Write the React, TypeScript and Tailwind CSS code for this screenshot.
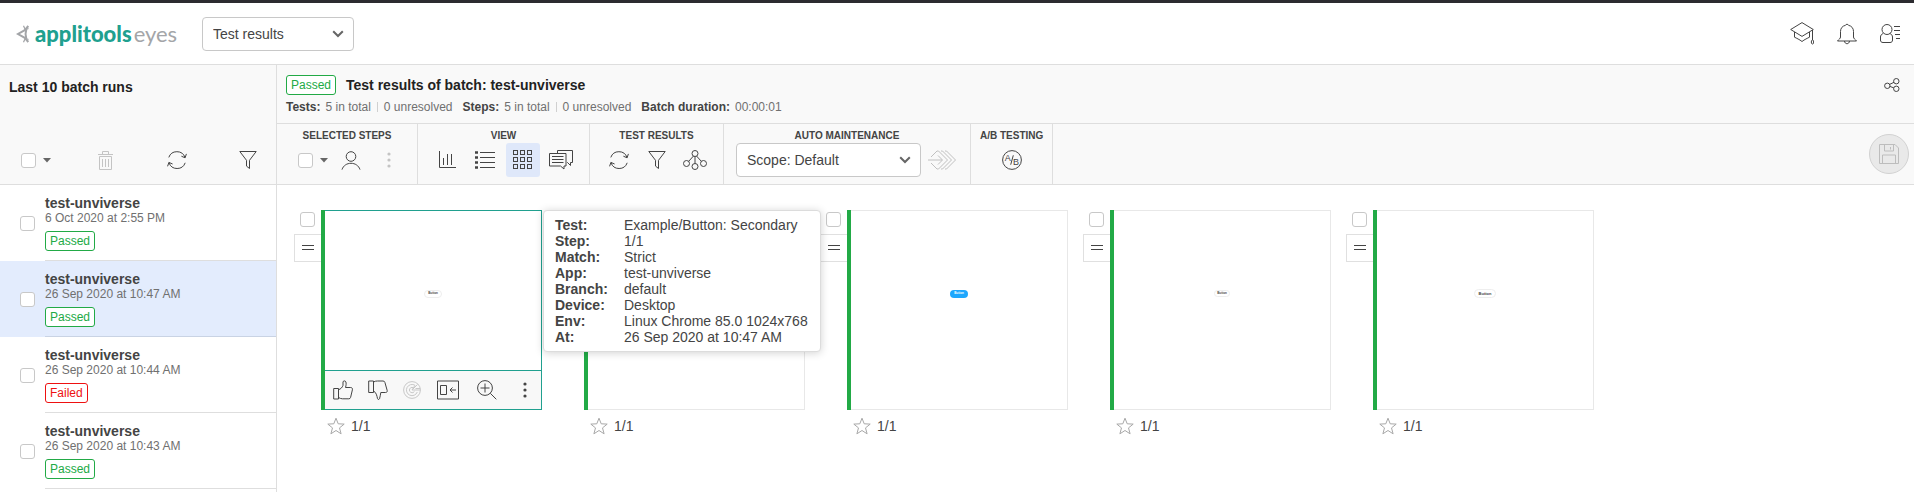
import type { ReactNode } from "react";

type IconProps = { w: number; h: number; className?: string; children: ReactNode };

function Icon({ w, h, className = "text-[#444]", children }: IconProps) {
  return (
    <svg
      width={w}
      height={h}
      viewBox={`0 0 ${w} ${h}`}
      fill="none"
      stroke="currentColor"
      strokeWidth="1"
      aria-hidden="true"
      className={`shrink-0 ${className}`}
    >
      {children}
    </svg>
  );
}

const EyeLogo = () => (
  <Icon w={14} h={18} className="text-[#a3a5a8]">
    <path d="M12.300 1L8.800 5.200 2 9l6.800 3.800 3.500 4.200" strokeWidth="2" />
    <path d="M7.500.8l1.800 4 3.200-1.300M7.500 17.200l1.800-4 3.200 1.300" strokeWidth="1.200" />
    <path d="M10.300 4.500c-1 3-1 6 0 9" strokeWidth="2" />
  </Icon>
);

const RefreshIcon = () => (
  <Icon w={20} h={18}>
    <path d="M1.8 6.4A8.6 8.6 0 0 1 18 6.4M18.2 11.8A8.6 8.6 0 0 1 2 11.8" />
    <path d="M14.4 5.2l3.7 1.6 1.3-3.9M5.6 13l-3.700-1.600L.6 15.300" />
  </Icon>
);

const FilterIcon = () => (
  <Icon w={18} h={18}>
    <path d="M.8.5h16.400L10.500 9.300v8.200l-3-2.400V9.300z" />
  </Icon>
);

const TrashIcon = () => (
  <Icon w={15} h={19} className="text-[#c4c4c4]">
    <path d="M1.500 5.500h12v13h-12zM0 3.500h15M4.500 3.500v-3h6v3M4.500 8v8M7.500 8v8M10.500 8v8" />
  </Icon>
);

const PersonIcon = () => (
  <Icon w={20} h={19}>
    <circle cx="10" cy="5.500" r="4.800" />
    <path d="M1 18.600c1.400-4.200 5-6.300 9-6.300s7.600 2.100 9 6.300" />
  </Icon>
);

const DotsIcon = ({ className }: { className?: string }) => (
  <Icon w={4} h={18} className={className}>
    <g fill="currentColor" stroke="none">
      <circle cx="2" cy="3" r="1.600" />
      <circle cx="2" cy="9" r="1.600" />
      <circle cx="2" cy="15" r="1.600" />
    </g>
  </Icon>
);

const ChartIcon = () => (
  <Icon w={18} h={18}>
    <path d="M1.500 0v16.500H18M5.500 7v7M9.500 3v11M13.500 3v11" />
  </Icon>
);

const ListIcon = () => (
  <Icon w={20} h={18}>
    <path d="M5 1.500h15M5 6.500h15M5 11.500h15M5 16.500h15" />
    <path d="M0 1.500h3M0 6.500h3M0 11.500h3M0 16.500h3" strokeWidth="2.500" />
  </Icon>
);

const GridIcon = () => (
  <Icon w={20} h={20}>
    {[0.5, 7.5, 14.5].map((y) =>
      [0.5, 7.5, 14.5].map((x) => <rect key={`${x}-${y}`} x={x} y={y} width="4" height="4" />),
    )}
  </Icon>
);

const CommentsIcon = () => (
  <Icon w={24} h={20}>
    <path d="M8.500 3V.5h15v12h-2v3l-3-3H18" />
    <path d="M.5 3.500h16.500v12.500h-2v3l-3.500-3H.5z" />
    <path d="M3 6.500h11.500M3 9.500h11.500M3 12.500h11.500" />
  </Icon>
);

const NodesIcon = () => (
  <Icon w={24} h={20}>
    <circle cx="12" cy="3.500" r="3" />
    <circle cx="3.500" cy="13.500" r="3" />
    <circle cx="20.500" cy="13.500" r="3" />
    <circle cx="12" cy="16.500" r="3" />
    <path d="M12 6.500v7M10.500 6L5.500 11.500M13.500 6l5 5.500" />
  </Icon>
);

const PropagateIcon = () => (
  <Icon w={28} h={20} className="text-[#c0c0c0]">
    <path d="M0 10h14M10 5.500l4.500 4.500-4.500 4.500" />
    <path d="M3 7l6-6h1.500l9 9-9 9H9l-6-6" />
    <path d="M13 1h1.500l9 9-9 9H13M17 1h1.500l9 9-9 9H17" />
  </Icon>
);

const AbIcon = () => (
  <Icon w={20} h={20}>
    <circle cx="10" cy="10" r="9.400" />
    <path d="M8.700 14.700l2.600-9.400" />
    <g fill="currentColor" stroke="none" fontFamily="Liberation Sans, sans-serif" fontSize="9">
      <text x="2.800" y="11">A</text>
      <text x="11" y="15">B</text>
    </g>
  </Icon>
);

const CapIcon = () => (
  <Icon w={24} h={23}>
    <path d="M12 .6l11.300 6.900L12 14.400.7 7.500z" />
    <path d="M4.500 10v5.200c2 1 5 2.300 7.500 4.300 2.500-2 5.500-3.300 7.500-4.300V10M22.500 8v10" />
    <ellipse cx="22.500" cy="20" rx="1.200" ry="2" />
  </Icon>
);

const BellIcon = () => (
  <Icon w={20} h={22}>
    <path d="M8.500 2.300a1.600 1.600 0 0 1 3 0c3.200.7 5 3 5 6.200v5.500c0 1.600 1.600 2.200 3 4H.5c1.400-1.800 3-2.400 3-4V8.500c0-3.200 1.800-5.500 5-6.200z" />
    <path d="M7.500 18c.2 3.600 4.800 3.600 5 0" />
  </Icon>
);

const AccountIcon = () => (
  <Icon w={20} h={19}>
    <circle cx="7" cy="5.500" r="5" />
    <path d="M3.300 9.500C1.500 10 .5 11.500.5 13v3c0 1.500.7 2.500 2.500 2.500h7c1.800 0 2.500-1 2.500-2.500v-3c0-1.500-1-3-2.800-3.500" />
    <path d="M14 2.500h6M14 6.500h6M15 10.500h5M16 14.500h4" />
  </Icon>
);

const ShareIcon = () => (
  <Icon w={16} h={14}>
    <circle cx="3.300" cy="7.800" r="2.700" />
    <circle cx="12.300" cy="3.200" r="2.700" />
    <circle cx="12.300" cy="10.800" r="2.700" />
    <path d="M5.600 6.400L10 4.300M5.900 8.400l3.900 1.500" />
  </Icon>
);

const SaveIcon = () => (
  <Icon w={20} h={20} className="text-[#bdbdbd]">
    <path d="M.5.500h15.500l3.500 3.500v15.500H.500zM5.500 1v6h9V1M11.500 3v2.500M3.500 19v-8h13v8" />
  </Icon>
);

const ThumbUpIcon = () => (
  <Icon w={20} h={20}>
    <path d="M.7 8.500h4.800v10.500H.7zM5.500 17.500c1.500.8 2.500 1.300 4 1.300h6.300c1 0 1.600-.5 1.800-1.400l1.800-7.600c.3-1.300-.4-2.300-1.700-2.300h-5.200c.7-2.300.8-4.200.4-5.500C12.500.6 10.200.4 10 2v3.300c-.6 2.100-2.300 3.800-4.500 4.400" />
  </Icon>
);

const ThumbDownIcon = () => (
  <Icon w={20} h={20}>
    <path d="M.7 1h4.800v11.500H.7zM5.500 2c1.500-.8 2.500-1 4-1h5.500c1 0 1.700.5 1.900 1.400l2.300 8.100c.3 1.200-.4 2-1.700 2h-4.700c-.3 2-.7 4.600-1.300 6.300-.5 1-1.700.8-2-.2-.6-2.900-1.300-6.300-4-7.600" />
  </Icon>
);

const TargetIcon = () => (
  <Icon w={18} h={18} className="text-[#c8c8c8]">
    <circle cx="9" cy="9" r="8.400" />
    <path d="M14.300 11A5.600 5.600 0 1 1 12 4.300L9 9h8.400M11.500 10.300A2.700 2.700 0 1 1 10 6.500M9 9l5.500-5.500M12.500 7.500h4.800" />
  </Icon>
);

const BaselineIcon = () => (
  <Icon w={22} h={20}>
    <path d="M.5 1h21v18H.500zM3.500 5.500h6v9h-6zM13 10h6M15.500 7.500L13 10l2.500 2.500" />
  </Icon>
);

const ZoomIcon = () => (
  <Icon w={20} h={20}>
    <circle cx="8" cy="8" r="7.400" />
    <path d="M13.300 13.300l6 6M8 3.500v9M3.500 8h9" />
  </Icon>
);

const StarIcon = () => (
  <Icon w={18} h={18} className="text-[#a8a8a8]">
    <path d="M9 1.200l2.200 5.600 6 .3-4.700 3.800 1.600 5.900L9 13.500l-5.100 3.300 1.600-5.900L.8 7.100l6-.3z" />
  </Icon>
);

const Chevron = () => (
  <svg width="12" height="8" viewBox="0 0 12 8" fill="none" stroke="#666" strokeWidth="2" aria-hidden="true" className="pointer-events-none col-start-1 row-start-1 mr-[10px] self-center justify-self-end">
    <path d="M1.200 1.200L6 6l4.800-4.800" />
  </svg>
);

function Checkbox({ label }: { label: string }) {
  return (
    <input
      type="checkbox"
      aria-label={label}
      className="block size-[15px] shrink-0 appearance-none rounded-[3px] border border-[#c8c8c8] bg-white checked:bg-[#20a08f]"
    />
  );
}

function Caret({ label }: { label: string }) {
  return (
    <button aria-label={label} className="flex h-[34px] w-[8px] items-center justify-center">
      <svg width="8" height="5" viewBox="0 0 8 5" fill="#666" aria-hidden="true">
        <path d="M0 0h8L4 4.500z" />
      </svg>
    </button>
  );
}

function Dropdown({ label, value, className }: { label: string; value: string; className: string }) {
  return (
    <div className={`grid h-[34px] shrink-0 ${className}`}>
      <select
        aria-label={label}
        defaultValue={value}
        className="col-start-1 row-start-1 w-full appearance-none rounded border border-[#c8c8c8] bg-white pl-[10px] text-sm text-[#444]"
      >
        <option>{value}</option>
      </select>
      <Chevron />
    </div>
  );
}

function ToolButton({ label, active = false, children }: { label: string; active?: boolean; children: ReactNode }) {
  return (
    <button
      aria-label={label}
      className={`flex size-[34px] shrink-0 items-center justify-center rounded-[3px] ${active ? "bg-[#dfe8fa]" : ""}`}
    >
      {children}
    </button>
  );
}

function ToolGroup({ title, children }: { title: string; children: ReactNode }) {
  return (
    <div className="flex shrink-0 flex-col items-center border-r border-[#dedede] pt-[5px]">
      <h2 className="px-[9px] pb-px text-[10px] leading-[13px] font-bold whitespace-nowrap">{title}</h2>
      <div className="flex items-center gap-1 pr-[11px] pl-3">{children}</div>
    </div>
  );
}

function Badge({ status }: { status: string }) {
  const color = status === "Passed" ? "border-[#22aa46] text-[#22aa46]" : "border-[#e11] text-[#e11]";
  return (
    <span className={`block h-5 w-fit rounded-[3px] border bg-white px-1 text-[12px] leading-[18px] ${color}`}>
      {status}
    </span>
  );
}

const batches = [
  { date: "6 Oct 2020 at 2:55 PM", status: "Passed" },
  { date: "26 Sep 2020 at 10:47 AM", status: "Passed" },
  { date: "26 Sep 2020 at 10:44 AM", status: "Failed" },
  { date: "26 Sep 2020 at 10:43 AM", status: "Passed" },
];

function Sidebar() {
  return (
    <aside className="w-[277px] shrink-0 border-r border-[#dedede]">
      <div className="flex h-[120px] flex-col justify-between border-b border-[#dedede] bg-[#f9f9f9]">
        <h2 className="px-[9px] pt-[13px] text-sm leading-[18px] font-bold text-[#222]">Last 10 batch runs</h2>
        <div className="flex items-center justify-between pr-[11px] pb-[7px] pl-[21px]">
          <div className="flex items-center gap-[7px]">
            <Checkbox label="Select all batches" />
            <Caret label="Batch selection options" />
          </div>
          <ToolButton label="Delete"><TrashIcon /></ToolButton>
          <ToolButton label="Refresh"><RefreshIcon /></ToolButton>
          <ToolButton label="Filter"><FilterIcon /></ToolButton>
        </div>
      </div>
      <ul>
        {batches.map((b) => {
          const selected = b.date.includes("10:47");
          return (
            <li key={b.date} className={`flex h-[76px] items-stretch ${selected ? "bg-[#e3ecfd]" : ""}`}>
              <div className="flex w-[45px] items-center pl-5">
                <Checkbox label={`Select batch ${b.date}`} />
              </div>
              <div className={`flex-1 border-b pt-[10px] ${selected ? "border-[#c9d3e4]" : "border-[#dedede]"}`}>
                <a href="#batch" className="block text-sm leading-4 font-bold">test-unviverse</a>
                <p className="mb-[5px] text-[12px] leading-[15px] text-[#707070]">{b.date}</p>
                <Badge status={b.status} />
              </div>
            </li>
          );
        })}
      </ul>
    </aside>
  );
}

const details = [
  ["Test:", "Example/Button: Secondary"],
  ["Step:", "1/1"],
  ["Match:", "Strict"],
  ["App:", "test-unviverse"],
  ["Branch:", "default"],
  ["Device:", "Desktop"],
  ["Env:", "Linux Chrome 85.0 1024x768"],
  ["At:", "26 Sep 2020 at 10:47 AM"],
];

function StepTooltip() {
  return (
    <dl
      role="tooltip"
      className="absolute top-0 left-full z-10 ml-px grid grid-cols-[69px_auto] rounded border border-[#dcdcdc] bg-white py-[6px] pr-[12px] pl-[11px] text-sm leading-4 whitespace-nowrap shadow-[0_1px_8px_rgba(0,0,0,0.18)]"
    >
      {details.map(([k, v]) => (
        <div key={k} className="contents">
          <dt className="font-bold">{k}</dt>
          <dd>{v}</dd>
        </div>
      ))}
    </dl>
  );
}

const steps = [
  { id: 1, pill: "w-[18px] h-2 text-[3px] border border-[#eee]", hovered: true },
  { id: 2, pill: "w-[18px] h-2 text-[3px] border border-[#eee]", hovered: false },
  { id: 3, pill: "w-[18px] h-2 text-[3px] bg-[#1ea7fd] text-white", hovered: false },
  { id: 4, pill: "w-4 h-[7px] text-[3px] border border-[#eee]", hovered: false },
  { id: 5, pill: "w-[22px] h-[9px] text-[4px] border border-[#eee]", hovered: false },
];

function StepActions() {
  return (
    <div className="absolute inset-x-0 bottom-0 flex h-[39px] items-center gap-[15px] border-t border-[#20a08f] bg-[#f8f8f8] pl-[8px]">
      <button aria-label="Accept" className="flex w-5 justify-center"><ThumbUpIcon /></button>
      <button aria-label="Reject" className="flex w-5 justify-center"><ThumbDownIcon /></button>
      <button aria-label="Root cause" className="flex w-[18px] justify-center"><TargetIcon /></button>
      <button aria-label="Show baseline" className="flex w-6 justify-center"><BaselineIcon /></button>
      <button aria-label="Zoom" className="flex w-6 justify-center"><ZoomIcon /></button>
      <button aria-label="More" className="flex w-[22px] justify-center"><DotsIcon /></button>
    </div>
  );
}

function StepCard({ step }: { step: (typeof steps)[number] }) {
  return (
    <article className="flex w-[248px] items-start">
      <div className="flex w-[27px] shrink-0 flex-col pt-[2px]">
        <div className="pb-[7px] pl-[6px]">
          <Checkbox label={`Select step ${step.id}`} />
        </div>
        <button aria-label="Match status" className="flex h-7 items-center justify-center border border-r-0 border-[#e0e0e0]">
          <Icon w={12} h={6}>
            <path d="M0 .5h12M0 4.500h12" />
          </Icon>
        </button>
      </div>
      <div className="flex-1">
        <div className="relative flex h-[200px]">
          <div className="w-1 bg-[#22aa46]" />
          <div className={`relative flex-1 border border-l-0 ${step.hovered ? "border-[#20a08f]" : "border-[#e8e8e8]"}`}>
            <div className="flex h-[165px] items-center justify-center">
              <span className={`flex items-center justify-center rounded-full leading-none font-bold ${step.pill}`}>
                Button
              </span>
            </div>
            {step.hovered && <StepActions />}
          </div>
          {step.hovered && <StepTooltip />}
        </div>
        <div className="flex items-center gap-[6px] pt-[7px] pl-[6px] text-sm leading-[18px]">
          <button aria-label="Add to favourites"><StarIcon /></button>
          <span>1/1</span>
        </div>
      </div>
    </article>
  );
}

function BatchHeader() {
  return (
    <div className="flex h-[59px] items-start justify-between border-b border-[#dedede] pt-[10px] pr-[14px] pl-[9px]">
      <div>
        <div className="flex items-center gap-[10px]">
          <Badge status="Passed" />
          <h1 className="text-sm leading-5 font-bold text-[#222]">Test results of batch: test-unviverse</h1>
        </div>
        <div className="flex items-center gap-[10px] pt-[3px] text-[12px] leading-[18px] text-[#707070]">
          {["Tests:", "Steps:"].map((k) => (
            <div key={k} className="flex items-center gap-[5px]">
              <b className="text-[#444]">{k}</b>
              <span>5 in total</span>
              <span className="mx-px h-[10px] w-px bg-[#d0d0d0]" />
              <span>0 unresolved</span>
            </div>
          ))}
          <div className="flex gap-[5px]">
            <b className="text-[#444]">Batch duration:</b>
            <span>00:00:01</span>
          </div>
        </div>
      </div>
      <button aria-label="Share" className="pt-[3px]"><ShareIcon /></button>
    </div>
  );
}

function Toolbar() {
  return (
    <div className="flex h-[61px] items-stretch border-b border-[#dedede]">
      <ToolGroup title="SELECTED STEPS">
        <div className="flex items-center gap-[7px] pr-[2px] pl-[9px]">
          <Checkbox label="Select all steps" />
          <Caret label="Step selection options" />
        </div>
        <ToolButton label="Assign"><PersonIcon /></ToolButton>
        <ToolButton label="More actions"><DotsIcon className="text-[#c4c4c4]" /></ToolButton>
      </ToolGroup>
      <ToolGroup title="VIEW">
        <ToolButton label="Statistics"><ChartIcon /></ToolButton>
        <ToolButton label="List"><ListIcon /></ToolButton>
        <ToolButton label="Grid" active><GridIcon /></ToolButton>
        <ToolButton label="Remarks"><CommentsIcon /></ToolButton>
      </ToolGroup>
      <ToolGroup title="TEST RESULTS">
        <ToolButton label="Refresh results"><RefreshIcon /></ToolButton>
        <ToolButton label="Filter results"><FilterIcon /></ToolButton>
        <ToolButton label="Group results"><NodesIcon /></ToolButton>
      </ToolGroup>
      <ToolGroup title="AUTO MAINTENANCE">
        <Dropdown label="Maintenance scope" value="Scope: Default" className="w-[185px]" />
        <ToolButton label="Propagate"><PropagateIcon /></ToolButton>
      </ToolGroup>
      <ToolGroup title="A/B TESTING">
        <ToolButton label="A/B variations"><AbIcon /></ToolButton>
      </ToolGroup>
      <div className="flex flex-1 items-center justify-end pr-[5px]">
        <button aria-label="Save" className="flex size-10 items-center justify-center rounded-full border border-[#d2d2d2] bg-[#e9e9e9]">
          <SaveIcon />
        </button>
      </div>
    </div>
  );
}

export default function App() {
  return (
    <div className="flex min-h-screen flex-col bg-white font-['Liberation_Sans',Arial,sans-serif] text-[#444]">
      <header className="flex h-[65px] items-center justify-between border-t-[3px] border-b border-t-[#2c2b30] border-b-[#dedede] pr-[14px] pl-4">
        <div className="flex items-center gap-[22px]">
          <a href="#home" className="flex w-[164px] items-center gap-[5px] font-['Lato',sans-serif] text-[22px] leading-7">
            <EyeLogo />
            <span className="flex gap-[2px]">
              <span className="font-black text-[#20a08f]">applitools</span>
              <span className="font-normal text-[#a3a5a8]">eyes</span>
            </span>
          </a>
          <Dropdown label="Section" value="Test results" className="w-[152px]" />
        </div>
        <div className="flex items-center gap-[23px]">
          <button aria-label="Learn"><CapIcon /></button>
          <button aria-label="Notifications"><BellIcon /></button>
          <button aria-label="Account"><AccountIcon /></button>
        </div>
      </header>
      <div className="flex flex-1 items-stretch">
        <Sidebar />
        <main className="min-w-0 flex-1">
          <div className="bg-[#f9f9f9]">
            <BatchHeader />
            <Toolbar />
          </div>
          <section className="flex flex-wrap gap-x-[15px] gap-y-6 pt-[25px] pl-[17px]">
            {steps.map((s) => (
              <StepCard key={s.id} step={s} />
            ))}
          </section>
        </main>
      </div>
    </div>
  );
}
